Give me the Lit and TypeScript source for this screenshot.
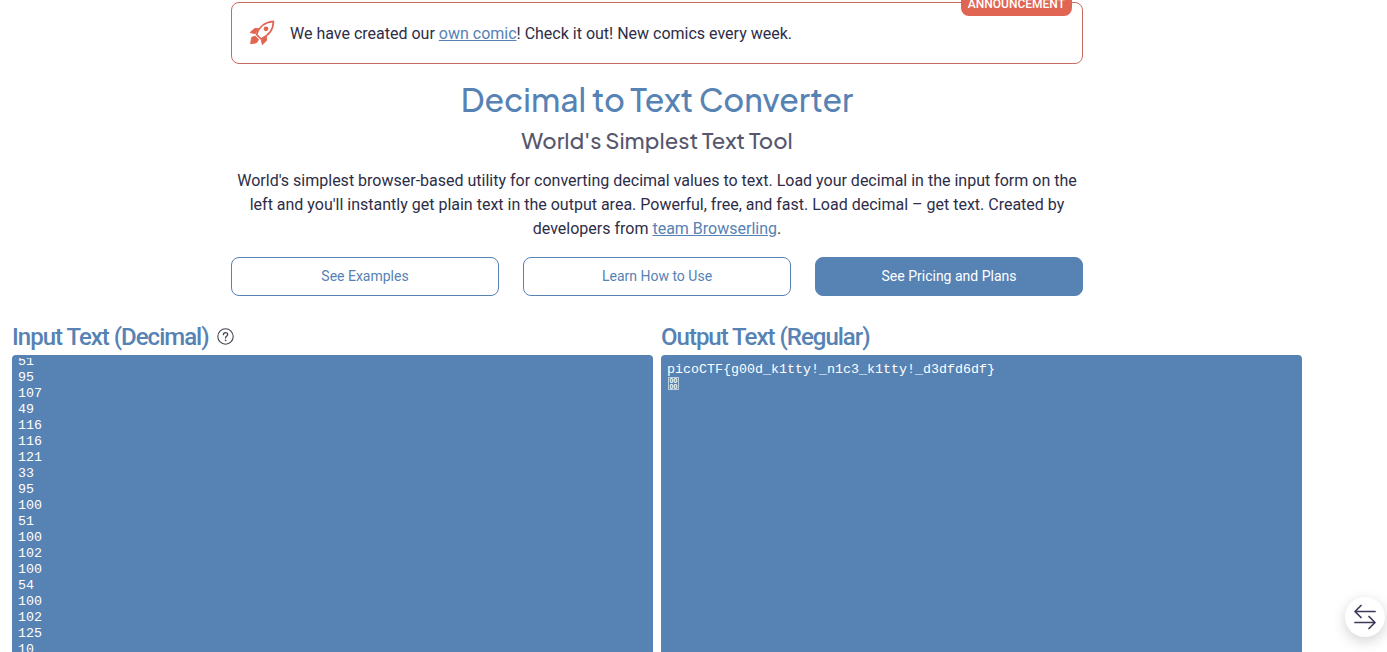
import { LitElement, html, css } from "lit";
import { customElement, query, state } from "lit/decorators.js";

const MESSAGE = "picoCTF{g00d_k1tty!_n1c3_k1tty!_d3dfd6df}\n";

@customElement("app-root")
export class AppRoot extends LitElement {
  static styles = css`
    :host {
      display: block;
      height: 100vh;
      overflow: hidden;
      position: relative;
      box-sizing: border-box;
      padding: 2px 85px 0 12px;
      background: #fff;
      color: #2d2d48;
      font-family: Roboto, sans-serif;
      font-size: 16px;
      line-height: 24px;
    }
    * { box-sizing: border-box; }
    a { color: #5682b4; }
    .intro { max-width: 852px; margin: 0 auto; text-align: center; }
    .notice {
      position: relative;
      display: flex;
      align-items: center;
      gap: 13px;
      height: 62px;
      padding: 1px 17px 0;
      border: 1px solid #c96a60;
      border-radius: 8px;
      text-align: left;
    }
    .notice p { margin: 0; }
    .badge {
      position: absolute;
      right: 10px;
      bottom: 47px;
      padding: 0 7px;
      border-radius: 8px;
      background: #e06552;
      color: #fff;
      font-size: 12px;
      font-weight: 500;
    }
    .rocket { width: 28px; height: 28px; flex: none; }
    h1, h2 {
      margin: 0;
      font-family: "Plus Jakarta Sans", Inter, sans-serif;
      font-weight: 500;
    }
    h1 { margin-top: 11px; font-size: 32px; line-height: 48px; color: #5682b4; }
    h2 { margin-top: 1px; font-size: 22px; line-height: 32px; color: #56566c; }
    .lead { margin: 13px 0 16px; }
    .actions { display: grid; grid-template-columns: repeat(3, 1fr); gap: 24px; }
    .btn {
      height: 39px;
      padding: 0 6px 2px;
      border: 1px solid #5682b4;
      border-radius: 8px;
      background: #fff;
      color: #5682b4;
      font: 400 14px/20px Roboto, sans-serif;
    }
    .btn.primary { background: #5682b4; color: #fff; }
    .panels { display: grid; grid-template-columns: 1fr 1fr; gap: 8px; margin-top: 24px; }
    .title { display: flex; align-items: center; gap: 8px; height: 35px; padding-bottom: 2px; }
    .title label { color: #5682b4; font-size: 24px; font-weight: 500; line-height: 32px; letter-spacing: -1px; }
    .help { display: flex; padding: 0; border: 0; background: none; }
    .help svg { width: 17px; height: 17px; }
    .field { position: relative; }
    textarea {
      display: block;
      width: 100%;
      height: 309px;
      padding: 4px 3px 3px;
      border: 3px solid #5682b4;
      border-radius: 4px;
      outline: none;
      resize: none;
      background: #5682b4;
      color: #fff;
      font-family: "Liberation Mono", monospace;
      font-size: 10pt;
      line-height: 16px;
      scrollbar-width: none;
    }
    .control {
      position: absolute;
      left: 7px;
      top: 22px;
      width: 11px;
      height: 13px;
      border: 1px solid #b9cde1;
      color: #fff;
      font: 700 7px/6px "Liberation Sans", sans-serif;
      text-align: center;
    }
    .swap {
      position: absolute;
      right: 2px;
      bottom: 15px;
      display: grid;
      place-items: center;
      width: 40px;
      height: 40px;
      padding: 0;
      border: 0;
      border-radius: 50%;
      background: #fff;
      box-shadow: 0 4px 14px rgba(0, 0, 0, 0.18);
    }
    .swap svg { width: 24px; height: 28px; }
  `;

  @state() private message = MESSAGE;
  @query("#input") private input!: HTMLTextAreaElement;

  private get codes() {
    return [...this.message].map((c) => c.charCodeAt(0)).join("\n");
  }

  firstUpdated() {
    this.input.scrollTop = this.input.scrollHeight;
  }

  private convert() {
    const codes = this.input.value.split(/\s+/).filter(Boolean).map(Number);
    this.message = String.fromCharCode(...codes);
  }

  render() {
    return html`
      <header class="intro">
        <div class="notice">
          <svg class="rocket" viewBox="1 1 28 28" aria-hidden="true" fill="none" stroke="#e06552" stroke-width="1.7" stroke-linejoin="round">
            <path d="M8.6 15.6C10.4 9 16 3.2 25.4 2.4 25.4 10.6 19.8 16.8 13 20Z" />
            <path d="M10.8 9.6 6.6 9.4 2 13.6 7.2 14.8ZM18.6 17.6 18.6 21.6 14.4 25.8 13.2 21ZM7 17 3.6 18.4 2.6 24.8 8.6 23.8 10.6 20.6Z" fill="#e06552" stroke-width=".8" />
            <circle cx="18" cy="9.8" r="2.4" fill="#e06552" stroke="none" />
          </svg>
          <p>We have created our <a href="#comic">own comic</a>! Check it out! New comics every week.</p>
          <span class="badge">ANNOUNCEMENT</span>
        </div>
        <h1>Decimal to Text Converter</h1>
        <h2>World's Simplest Text Tool</h2>
        <p class="lead">
          World's simplest browser-based utility for converting decimal values to text. Load your decimal in the input
          form on the left and you'll instantly get plain text in the output area. Powerful, free, and fast. Load
          decimal – get text. Created by developers from <a href="#team">team Browserling</a>.
        </p>
        <div class="actions">
          <button class="btn">See Examples</button>
          <button class="btn">Learn How to Use</button>
          <button class="btn primary">See Pricing and Plans</button>
        </div>
      </header>
      <main class="panels">
        <section>
          <div class="title">
            <label for="input">Input Text (Decimal)</label>
            <button class="help" aria-label="Help">
              <svg viewBox="0 0 17 17" fill="none" stroke="#45454f" stroke-width="1.1" stroke-linecap="round">
                <circle cx="8.5" cy="8.5" r="7.7" />
                <path d="M6.4 6.7C6.4 3.9 10.7 3.9 10.7 6.6 10.7 8.3 8.5 8.2 8.5 10" stroke-width="1.3" />
                <circle cx="8.5" cy="12.3" r=".5" fill="#45454f" stroke-width=".6" />
              </svg>
            </button>
          </div>
          <textarea id="input" spellcheck="false" .value=${this.codes} @change=${this.convert}></textarea>
        </section>
        <section>
          <div class="title"><label for="output">Output Text (Regular)</label></div>
          <div class="field">
            <textarea id="output" readonly spellcheck="false" .value=${this.message}></textarea>
            <span class="control" aria-hidden="true">00<br />00</span>
          </div>
        </section>
      </main>
      <button class="swap" aria-label="Swap input and output">
        <svg viewBox="0 0 24 28" fill="none" stroke="#3d3a5c" stroke-width="1.7" stroke-linecap="round" stroke-linejoin="round">
          <path d="M22 8.5H2M8 2.5 2 8.5 8 14.5M2 19.5H22M16 13.5 22 19.5 16 25.5" />
        </svg>
      </button>
    `;
  }
}
